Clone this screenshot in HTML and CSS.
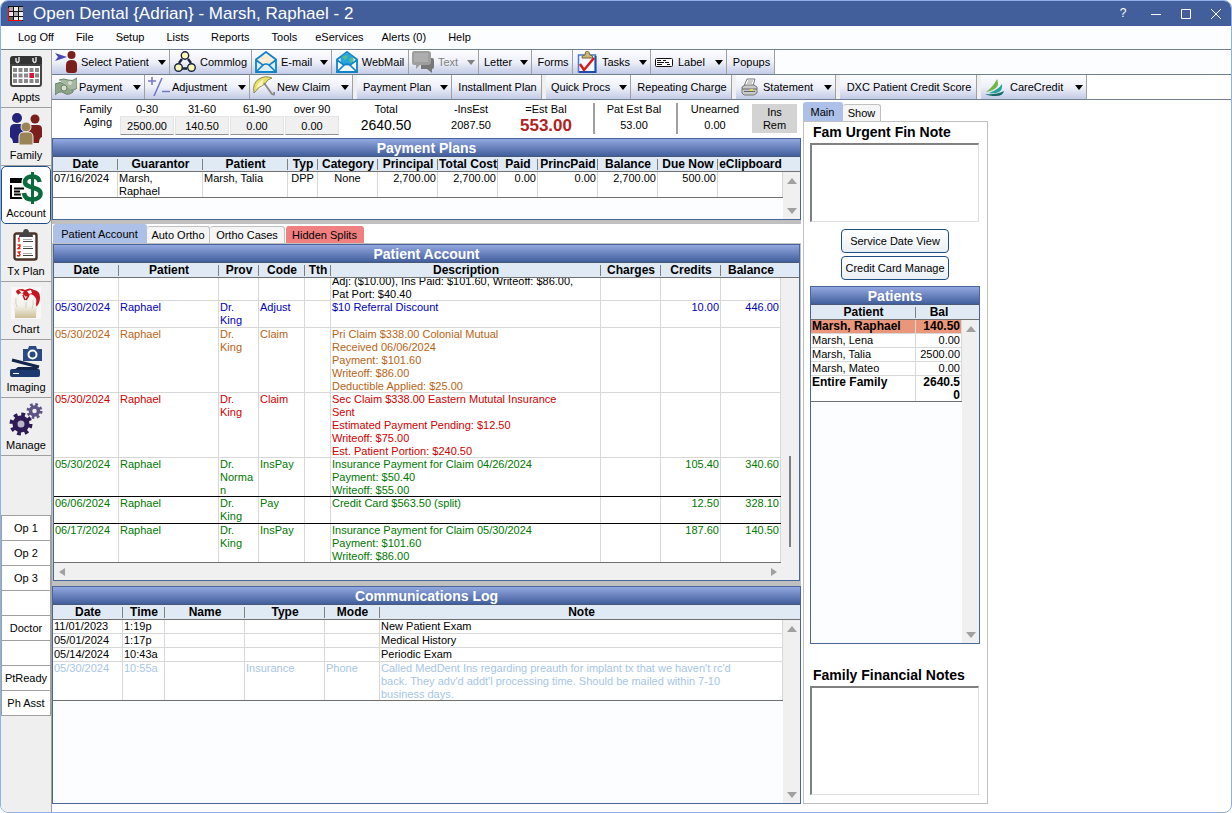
FILE: index.html
```html
<!DOCTYPE html>
<html lang="en">
<head>
  <meta charset="UTF-8">
  <meta name="viewport" content="width=device-width, initial-scale=1.0">
  <title>Open Dental {Adrian} - Marsh, Raphael - 2</title>
  <link rel="stylesheet" href="styles.css">
</head>
<body>
<div class="window">
  <header class="titlebar">
    <svg class="app-icon" width="16" height="16" viewBox="0 0 16 16">
      <rect width="15" height="15" fill="#111"/>
      <path d="M1 1h4v4H1zM11 1h4v4h-4zM6 6h4v4H6z" fill="#aaa"/>
      <path d="M6 1h4v4H6zM1 6h4v4H1zM11 6h4v4h-4zM6 11h4v3H6zM11 11h4v3h-4z" fill="#eee"/>
      <path d="M1 11h4v3H1z" fill="#666"/>
      <path d="M.5 2v13M0 14.5h14" stroke="#f00" stroke-width="1.2"/>
    </svg>
    <h1>Open Dental {Adrian} - Marsh, Raphael - 2</h1>
    <button class="win-btn help" aria-label="Help">?</button>
    <button class="win-btn" aria-label="Minimize"><svg width="12" height="12"><path d="M1 6.5h10" stroke="#fff"/></svg></button>
    <button class="win-btn" aria-label="Maximize"><svg width="12" height="12"><path d="M1.500 1.500h9v9h-9z" fill="none" stroke="#fff"/></svg></button>
    <button class="win-btn" aria-label="Close"><svg width="12" height="12"><path d="M1 1l10 10M11 1L1 11" stroke="#fff"/></svg></button>
  </header>

  <nav class="menu">
    <a href="#">Log Off</a><a href="#">File</a><a href="#">Setup</a><a href="#">Lists</a><a href="#">Reports</a><a href="#">Tools</a><a href="#">eServices</a><a href="#">Alerts (0)</a><a href="#">Help</a>
  </nav>

  <div class="body">
    <aside class="sidebar">
      <button class="module">
        <svg width="32" height="32" viewBox="0 0 32 32">
          <path d="M0 4q0-3 3-3h26q3 0 3 3v5H0z" fill="#333"/>
          <path d="M1 10h30v19q0 2-2 2H3q-2 0-2-2z" fill="#fff" stroke="#444" stroke-width="2"/>
          <path d="M3 15h26M3 20.500h26M3 26h26" stroke="#888" stroke-width="4" stroke-dasharray="4 1.500"/>
          <path d="M19.500 18h4.500v5h-4.500z" fill="#e0123f"/>
          <path d="M6 3v3q2 3 3 0V2M23 3v3q2 3 3 0V2" stroke="#ddd" stroke-width="1.500" fill="none"/>
        </svg>
        <span>Appts</span>
      </button>
      <button class="module">
        <svg width="34" height="32" viewBox="0 0 34 32">
          <circle cx="8" cy="5" r="5" fill="#23237a"/><path d="M1 24V16q0-5 5-5h4q5 0 5 5v14H4q0-4-3-6z" fill="#23237a"/>
          <circle cx="26" cy="6" r="4.500" fill="#7a1f1c"/><path d="M19 30V16q0-4 4-4h6q4 0 4 4v8q-3 1-3 6z" fill="#7a1f1c"/>
          <circle cx="17" cy="14" r="5" fill="#9a8354" stroke="#efefef"/><path d="M10 32v-8q0-5 5-5h4q5 0 5 5v8z" fill="#9a8354" stroke="#efefef"/>
        </svg>
        <span>Family</span>
      </button>
      <button class="module active">
        <svg width="34" height="32" viewBox="0 0 34 32">
          <path d="M1 6h18v5H1z" fill="#000"/><path d="M2 13v13h16M5 16.500h10M5 19.500h6M5 22.500h10" fill="none" stroke="#000" stroke-width="2"/>
          <path d="M30.500 10C30 5 26 4.500 23 4.500c-4 0-7 2-7 5.500 0 7 15.500 4 15.500 11.500 0 4-4 6-8 6-5 0-8-2-8.500-6.500" fill="none" stroke="#fff" stroke-width="7"/>
          <path d="M30.500 10C30 5 26 4.500 23 4.500c-4 0-7 2-7 5.500 0 7 15.500 4 15.500 11.500 0 4-4 6-8 6-5 0-8-2-8.500-6.500" fill="none" stroke="#0c6b3c" stroke-width="4.500"/>
          <path d="M23.500 0v32" stroke="#0c6b3c" stroke-width="3"/>
        </svg>
        <span>Account</span>
      </button>
      <button class="module">
        <svg width="26" height="32" viewBox="0 0 26 32">
          <rect x="1.500" y="4.500" width="22" height="26" rx="2" fill="#fff" stroke="#4b3325" stroke-width="2.400"/>
          <path d="M6 8q0-4 4-4 0-4 3-4t3 4q4 0 4 4z" fill="#444"/>
          <path d="M10 12.500h10M10 19.500h10M10 26.500h10" stroke="#444"/><path d="M10 10.500h9M10 17.500h9M10 24.500h9" stroke="#aaa"/>
          <path d="M5 10l1-1v4M4.500 16h2.500v1.500l-2 2h2.500M4.500 23h2.500l-1 1.500q2 1 0 2.500l-2-.5" fill="none" stroke="#e01a1a" stroke-width="1.300"/>
        </svg>
        <span>Tx Plan</span>
      </button>
      <button class="module">
        <svg width="30" height="32" viewBox="0 0 30 32">
          <defs>
            <linearGradient id="tooth" x1="0" y1="0" x2="0" y2="1"><stop offset="0" stop-color="#fff"/><stop offset=".6" stop-color="#f3f1ea"/><stop offset="1" stop-color="#cdbf97"/></linearGradient>
          </defs>
          <rect width="30" height="32" fill="#f8f8f8"/>
          <path d="M1 9Q2 3 8 2q7-2 13 0 8 1 8 8 0 7-3 11-1 4-1 10H4q0-7-1-11Q0 14 1 9z" fill="url(#tooth)"/>
          <path d="M6 3q5-2 8 0 5-3 9 0 6 1 6 7 0 6-3 9-1 1-1-2 1-5-1-7-3-4-6-2-3 3-5 0-3-3-5-1-1 2-2-1Q4 5 6 3z" fill="#c4161c"/>
          <path d="M12 8l2 5M18 8l-3 5" stroke="#c4161c" stroke-width="1.500"/>
          <path d="M8 3l5 1.500L11 7zM16 4l4-1 1 3-3 1z" fill="#fff"/>
          <path d="M5 11q-1 6 1 9M15 15v6M22 13q1 4-1 9" fill="none" stroke="#d2cfc4"/>
        </svg>
        <span>Chart</span>
      </button>
      <button class="module">
        <svg width="32" height="32" viewBox="0 0 32 32">
          <path d="M13 4h5l1-3h7l1 3h5v12H13z" fill="#2b4a84"/><circle cx="22.500" cy="9.500" r="4" fill="#2b4a84" stroke="#fff" stroke-width="2"/>
          <path d="M2 15l27 7" stroke="#14264c" stroke-width="3"/>
          <rect x="0" y="24" width="30" height="8" rx="2" fill="#1f3a70"/><path d="M4 25l4-3h18l3 3z" fill="#14264c"/><path d="M3 28.500h6" stroke="#fff"/>
        </svg>
        <span>Imaging</span>
      </button>
      <button class="module">
        <svg width="34" height="34" viewBox="0 0 34 34">
          <circle cx="12" cy="21" r="9.500" fill="none" stroke="#2e1a54" stroke-width="4" stroke-dasharray="3.730 3.730"/>
          <circle cx="12" cy="21" r="6" fill="#b9b4c8" stroke="#2e1a54" stroke-width="5"/>
          <circle cx="25.500" cy="8" r="6.500" fill="none" stroke="#5d5385" stroke-width="3" stroke-dasharray="2.550 2.550"/>
          <circle cx="25.500" cy="8" r="4" fill="#efefef" stroke="#5d5385" stroke-width="3.500"/>
        </svg>
        <span>Manage</span>
      </button>
      <ul class="rooms">
        <li>Op 1</li><li>Op 2</li><li>Op 3</li><li></li><li>Doctor</li><li></li><li>PtReady</li><li>Ph Asst</li>
      </ul>
    </aside>

    <div class="content">
      <div class="toolbar">
        <button class="tool select-patient"><svg width="22" height="22" viewBox="0 0 22 22"><path d="M0 2l12 4-12 4 3-4z" fill="#4747b5"/><circle cx="16.500" cy="4" r="4" fill="#7a1f1c"/><path d="M11 14q0-5 5.500-5t5.500 5v5q0 3-3 3h-5q-3 0-3-3z" fill="#7a1f1c"/></svg><span>Select Patient</span><i class="arrow"></i></button>
        <button class="tool commlog"><svg width="22" height="22" viewBox="0 0 22 22"><path d="M8 8l-3 4M14 8l3 4M8 17.500h5" stroke="#1a2340" stroke-width="2.400" fill="none"/><g fill="#fbf7b4" stroke="#1a2340" stroke-width="1.400"><circle cx="11" cy="4.500" r="3.700"/><circle cx="4.500" cy="16.500" r="3.800"/><circle cx="17.500" cy="16.500" r="3.800"/></g></svg><span>Commlog</span></button>
        <button class="tool email"><svg width="22" height="22" viewBox="0 0 22 22"><path d="M1 8.500L11 1l10 7.500V21H1z" fill="#d9effb" stroke="#1282c8" stroke-width="1.800"/><path d="M4 8l7-5.500L18 8v4l-7 4-7-4z" fill="#fdebd2"/><path d="M1 9l7 5L1 21M21 9l-7 5 7 7M8 14q3-2 6 0" fill="none" stroke="#1282c8" stroke-width="1.600"/></svg><span>E-mail</span><i class="arrow"></i></button>
        <button class="tool webmail"><svg width="22" height="22" viewBox="0 0 22 22"><path d="M1 8.500L11 1l10 7.500V21H1z" fill="#e6f5fc" stroke="#1282c8" stroke-width="1.800"/><circle cx="11" cy="9" r="6.500" fill="#27a5dc"/><path d="M6 6l4-2 2 2-3 3zM13 8l4-2v5l-3 1z" fill="#57bd8b"/><path d="M2 9.500l7 5h4l7-5v10H2z" fill="#f4fbff"/><path d="M1 9l7 5L1 21M21 9l-7 5 7 7M8 14q3-2 6 0" fill="none" stroke="#1282c8" stroke-width="1.600"/></svg><span>WebMail</span></button>
        <button class="tool text disabled"><svg width="22" height="22" viewBox="0 0 22 22"><path d="M9 7h11q2 0 2 2v7q0 2-2 2v4l-5-4H9z" fill="#777"/><path d="M2 0h14q3 0 3 3v8q0 3-3 3H8l-4 4v-4H2q-2 0-2-3V3q0-3 2-3z" fill="#9e9e9e"/><path d="M2 2h14v9H2z" fill="#adadad"/></svg><span>Text</span><i class="arrow"></i></button>
        <button class="tool letter"><span>Letter</span><i class="arrow"></i></button>
        <button class="tool forms"><span>Forms</span></button>
        <button class="tool tasks"><svg width="22" height="22" viewBox="0 0 22 22"><rect x="2.500" y="4" width="17" height="17" fill="#f4f8ff" stroke="#4a78d0" stroke-width="1.500"/><path d="M19.500 5v16H3" fill="none" stroke="#1f4cae" stroke-width="2"/><path d="M6 6q0-2 3-2 0-4 2-4t3 4q3 0 3 3H6z" fill="#c8b878" stroke="#75693c"/><path d="M4 13l4 6L18 7" fill="none" stroke="#d81b1b" stroke-width="2.500"/></svg><span>Tasks</span><i class="arrow"></i></button>
        <button class="tool label"><svg width="22" height="22" viewBox="0 0 22 22"><rect x="1.500" y="7.500" width="17" height="8" rx="1" fill="#fff" stroke="#111"/><path d="M3 9.500h4M9 9.500h3M3 11.500h7M11 11.500h4M3 13.500h5M13 13.500h3" stroke="#111"/></svg><span>Label</span><i class="arrow"></i></button>
        <button class="tool popups"><span>Popups</span></button>
      </div>
      <div class="toolbar second">
        <button class="tool payment"><svg width="22" height="22" viewBox="0 0 22 22"><path d="M0 8q5-3 10 0t8-3v11q-5 4-9 1t-9 2z" fill="#8fa58a" stroke="#6b8468"/><path d="M4 4q5-2 9 0t9-2v10q-3 3-6 2" fill="#a7b8a0" stroke="#6b8468"/><circle cx="9" cy="12" r="3" fill="#d7e0d0" stroke="#6b8468"/><circle cx="15" cy="7" r="2" fill="#d7e0d0"/></svg><span>Payment</span><i class="arrow"></i></button>
        <button class="tool adjustment"><svg width="22" height="22" viewBox="0 0 22 22"><path d="M0 5h8M4 1v8M6 20L14 2M14 15.500h8" stroke="#7878c8" stroke-width="1.600"/></svg><span>Adjustment</span><i class="arrow"></i></button>
        <button class="tool new-claim"><svg width="22" height="22" viewBox="0 0 22 22"><path d="M1 17Q-1 7 6 3q6-4 13-1-5 1-7 6-6 2-11 9z" fill="#e7e066" stroke="#8c8a52"/><path d="M3 12q2-6 8-9-2 4-1 6z" fill="#f8f6b4"/><path d="M11 7l8 11q3 2 2-2" fill="none" stroke="#888" stroke-width="1.800"/></svg><span>New Claim</span><i class="arrow"></i></button>
        <i class="gap"></i>
        <button class="tool payment-plan"><span>Payment Plan</span><i class="arrow"></i></button>
        <button class="tool installment"><span>Installment Plan</span></button>
        <i class="gap"></i>
        <button class="tool quick-procs"><span>Quick Procs</span><i class="arrow"></i></button>
        <button class="tool repeating"><span>Repeating Charge</span></button>
        <i class="gap"></i>
        <button class="tool statement"><svg width="22" height="22" viewBox="0 0 22 22"><path d="M8 3h8l-2 7H5z" fill="#fff" stroke="#777"/><path d="M9 5h5M8 7h5" stroke="#999"/><path d="M3 11l3-2h9l3 2v6l-3 2H5l-2-2z" fill="#c9c9c9" stroke="#777"/><path d="M3 13h15M5 15.500h11" stroke="#666"/><path d="M11 13h3v2h-3z" fill="#e4dc4c"/></svg><span>Statement</span><i class="arrow"></i></button>
        <i class="gap"></i>
        <button class="tool dxc"><span>DXC Patient Credit Score</span></button>
        <i class="gap"></i>
        <button class="tool carecredit"><svg width="22" height="22" viewBox="0 0 22 22"><path d="M2 16q7-5 11-13 2 5 0 8-4 4-11 5z" fill="#71b74a"/><path d="M5 17q9-3 13-9 1 5-3 8-4 2-10 1z" fill="#25a59a"/><path d="M1 18q11 1 19-3-1 5-8 5-7 0-11-2z" fill="#126a66"/></svg><span>CareCredit</span><i class="arrow"></i></button>
      </div>

      <div class="columns">
        <main class="main">
          <section class="aging">
            <div class="aging-title">Family<br>Aging</div>
            <div class="age"><label for="age1">0-30</label><input id="age1" value="2500.00" readonly></div>
            <div class="age"><label for="age2">31-60</label><input id="age2" value="140.50" readonly></div>
            <div class="age"><label for="age3">61-90</label><input id="age3" value="0.00" readonly></div>
            <div class="age"><label for="age4">over 90</label><input id="age4" value="0.00" readonly></div>
            <div class="sum total"><span>Total</span><b>2640.50</b></div>
            <div class="sum"><span>-InsEst</span><b>2087.50</b></div>
            <div class="sum balance"><span>=Est Bal</span><b>553.00</b></div>
            <i class="bar"></i>
            <div class="sum"><span>Pat Est Bal</span><b>53.00</b></div>
            <i class="bar"></i>
            <div class="sum unearned"><span>Unearned</span><b>0.00</b></div>
            <button class="ins-rem">Ins<br>Rem</button>
          </section>

          <section class="grid plans">
            <h2>Payment Plans</h2>
            <div class="grid-body">
              <div class="grid-table">
                <table>
                  <colgroup><col class="c65"><col class="c85"><col class="c85"><col class="c30"><col class="c60"><col class="c60"><col class="c60"><col class="c40"><col class="c60"><col class="c60"><col class="c60"><col></colgroup>
                  <thead><tr><th>Date</th><th>Guarantor</th><th>Patient</th><th>Typ</th><th>Category</th><th>Principal</th><th>Total Cost</th><th>Paid</th><th>PrincPaid</th><th>Balance</th><th>Due Now</th><th>eClipboard</th></tr></thead>
                  <tbody>
                    <tr class="last"><td>07/16/2024</td><td>Marsh,<br>Raphael</td><td>Marsh, Talia</td><td class="mid">DPP</td><td class="mid">None</td><td class="num">2,700.00</td><td class="num">2,700.00</td><td class="num">0.00</td><td class="num">0.00</td><td class="num">2,700.00</td><td class="num">500.00</td><td></td></tr>
                  </tbody>
                </table>
              </div>
              <div class="scroll"><i class="corner"></i><i class="up"></i><i class="down"></i></div>
            </div>
          </section>
          <div class="splitter"></div>

          <div class="tabs account-tabs">
            <button class="tab active">Patient Account</button><button class="tab">Auto Ortho</button><button class="tab">Ortho Cases</button><button class="tab hidden-splits">Hidden Splits</button>
          </div>
          <div class="tab-page">
            <section class="grid account">
              <h2>Patient Account</h2>
              <div class="grid-body">
                <div class="grid-table">
                  <table>
                    <colgroup><col class="c65"><col class="c100"><col class="c40"><col class="c46"><col class="c26"><col><col class="c60"><col class="c60"><col class="c60"></colgroup>
                    <thead><tr><th>Date</th><th>Patient</th><th>Prov</th><th>Code</th><th>Tth</th><th>Description</th><th>Charges</th><th>Credits</th><th>Balance</th></tr></thead>
                    <tbody>
                      <tr class="cut"><td></td><td></td><td></td><td></td><td></td><td><div class="tail">Adj: ($10.00), Ins Paid: $101.60, Writeoff: $86.00,<br>Pat Port: $40.40</div></td><td></td><td></td><td></td></tr>
                      <tr class="adjust"><td>05/30/2024</td><td>Raphael</td><td>Dr.<br>King</td><td>Adjust</td><td></td><td>$10 Referral Discount</td><td></td><td class="num">10.00</td><td class="num">446.00</td></tr>
                      <tr class="claim"><td>05/30/2024</td><td>Raphael</td><td>Dr.<br>King</td><td>Claim</td><td></td><td>Pri Claim $338.00 Colonial Mutual<br>Received 06/06/2024<br>Payment: $101.60<br>Writeoff: $86.00<br>Deductible Applied: $25.00</td><td></td><td></td><td></td></tr>
                      <tr class="claim-sent"><td>05/30/2024</td><td>Raphael</td><td>Dr.<br>King</td><td>Claim</td><td></td><td>Sec Claim $338.00 Eastern Mututal Insurance<br>Sent<br>Estimated Payment Pending: $12.50<br>Writeoff: $75.00<br>Est. Patient Portion: $240.50</td><td></td><td></td><td></td></tr>
                      <tr class="paid day-end"><td>05/30/2024</td><td>Raphael</td><td>Dr.<br>Norman</td><td>InsPay</td><td></td><td>Insurance Payment for Claim 04/26/2024<br>Payment: $50.40<br>Writeoff: $55.00</td><td></td><td class="num">105.40</td><td class="num">340.60</td></tr>
                      <tr class="paid day-end"><td>06/06/2024</td><td>Raphael</td><td>Dr.<br>King</td><td>Pay</td><td></td><td>Credit Card $563.50 (split)</td><td></td><td class="num">12.50</td><td class="num">328.10</td></tr>
                      <tr class="paid last"><td>06/17/2024</td><td>Raphael</td><td>Dr.<br>King</td><td>InsPay</td><td></td><td>Insurance Payment for Claim 05/30/2024<br>Payment: $101.60<br>Writeoff: $86.00</td><td></td><td class="num">187.60</td><td class="num">140.50</td></tr>
                    </tbody>
                  </table>
                </div>
                <div class="scroll"><i class="corner"></i><i class="thumb"></i></div>
              </div>
              <div class="hscroll"><i class="left"></i><i class="right"></i></div>
            </section>
          </div>

          <section class="grid commlog-grid">
            <h2>Communications Log</h2>
            <div class="grid-body">
              <div class="grid-table">
                <table>
                  <colgroup><col class="c70"><col class="c42"><col class="c80"><col class="c80"><col class="c55"><col></colgroup>
                  <thead><tr><th>Date</th><th>Time</th><th>Name</th><th>Type</th><th>Mode</th><th>Note</th></tr></thead>
                  <tbody>
                    <tr><td>11/01/2023</td><td>1:19p</td><td></td><td></td><td></td><td>New Patient Exam</td></tr>
                    <tr><td>05/01/2024</td><td>1:17p</td><td></td><td></td><td></td><td>Medical History</td></tr>
                    <tr><td>05/14/2024</td><td>10:43a</td><td></td><td></td><td></td><td>Periodic Exam</td></tr>
                    <tr class="insurance last"><td>05/30/2024</td><td>10:55a</td><td></td><td>Insurance</td><td>Phone</td><td>Called MedDent Ins regarding preauth for implant tx that we haven't rc'd<br>back. They adv'd addt'l processing time. Should be mailed within 7-10<br>business days.</td></tr>
                  </tbody>
                </table>
              </div>
              <div class="scroll"><i class="corner"></i><i class="up"></i><i class="down"></i></div>
            </div>
          </section>
        </main>

        <div class="side">
          <div class="tabs side-tabs">
            <button class="tab active">Main</button><button class="tab">Show</button>
          </div>
          <div class="panel">
            <label class="note-label" for="urgent">Fam Urgent Fin Note</label>
            <textarea id="urgent" class="urgent"></textarea>
            <button class="btn">Service Date View</button>
            <button class="btn">Credit Card Manage</button>
            <section class="grid patients">
              <h2>Patients</h2>
              <div class="grid-body">
                <div class="grid-table">
                  <table>
                    <colgroup><col><col class="c46"></colgroup>
                    <thead><tr><th>Patient</th><th>Bal</th></tr></thead>
                    <tbody>
                      <tr class="selected strong"><td>Marsh, Raphael</td><td class="num">140.50</td></tr>
                      <tr><td>Marsh, Lena</td><td class="num">0.00</td></tr>
                      <tr><td>Marsh, Talia</td><td class="num">2500.00</td></tr>
                      <tr><td>Marsh, Mateo</td><td class="num">0.00</td></tr>
                      <tr class="strong last"><td>Entire Family</td><td class="num">2640.50</td></tr>
                    </tbody>
                  </table>
                </div>
                <div class="scroll"><i class="corner"></i><i class="up"></i><i class="down"></i></div>
              </div>
            </section>
            <label class="note-label fin-label" for="financial">Family Financial Notes</label>
            <textarea id="financial" class="financial"></textarea>
          </div>
        </div>
      </div>
    </div>
  </div>
</div>
</body>
</html>
```

FILE: styles.css
```css
* {
  box-sizing: border-box;
}
body {
  margin: 0;
  background-color: #fff;
  font-family: "Liberation Sans", Arial, sans-serif;
  font-size: 11px;
  line-height: 13px;
  color: #000;
}
button, input, textarea {
  font: inherit;
  color: inherit;
  margin: 0;
  padding: 0;
  border-radius: 0;
}
button {
  border: none;
  background: none;
}
.window {
  display: flex;
  flex-direction: column;
  min-height: 100vh;
  border: 1px solid #8fb0e6;
  border-radius: 8px;
  overflow: hidden;
}

/* title bar */
.titlebar {
  display: flex;
  align-items: center;
  height: 25px;
  padding: 0 0 0 7px;
  background-color: #435f9b;
  color: #fff;
}
.titlebar h1 {
  flex: 1;
  margin: 0 0 0 9px;
  font-size: 17px;
  font-weight: normal;
  line-height: 24px;
}
.win-btn {
  display: flex;
  align-items: center;
  justify-content: center;
  width: 30px;
  height: 25px;
}
.win-btn.help {
  width: 36px;
  font-size: 12px;
}

/* menu */
.menu {
  display: flex;
  align-items: center;
  gap: 22px;
  height: 24px;
  padding-left: 17px;
  border-bottom: 1px solid #708090;
  background-color: #fcfdff;
}
.menu a {
  color: #000;
  text-decoration: none;
}
.menu a:nth-child(6),
.menu a:nth-child(7) {
  margin-right: -4px;
}

.body {
  display: flex;
  flex: 1;
}

/* module bar */
.sidebar {
  display: flex;
  flex-direction: column;
  flex: none;
  width: 51px;
  border-right: 1px solid #a0a0a0;
  background-color: #efefef;
}
.module {
  display: flex;
  flex-direction: column;
  align-items: center;
  justify-content: space-between;
  height: 58px;
  padding: 5px 0 3px;
  border-bottom: 1px solid #a0a0a0;
}
.module svg {
  flex: none;
}
.module.active {
  border: 1px solid #1f4e82;
  border-radius: 5px;
  background-color: #fff;
}
.rooms {
  list-style: none;
  margin: 59px 0 0;
  padding: 0;
}
.rooms li {
  height: 25px;
  border: 1px solid #a0a0a0;
  border-bottom: none;
  background-color: #fff;
  line-height: 24px;
  text-align: center;
}
.rooms li:last-child {
  height: 26px;
  border-bottom: 1px solid #a0a0a0;
}

/* toolbars */
.content {
  display: flex;
  flex-direction: column;
  flex: 1;
  min-width: 0;
}
.toolbar {
  display: flex;
  height: 25px;
  border-bottom: 1px solid #708090;
  background-color: #fcfdff;
}
.toolbar.second {
  background-color: #fff;
}
.tool {
  display: flex;
  align-items: center;
  justify-content: center;
  gap: 4px;
  padding: 0 3px;
  border-right: 1px solid #a0a0a0;
  background: linear-gradient(#fdfdff, #eef0f9 50%, #c3cbe6);
  white-space: nowrap;
}
.tool svg {
  flex: none;
}
.tool:has(.arrow) {
  justify-content: flex-start;
}
.tool span:first-child {
  padding-left: 2px;
}
.arrow {
  margin-left: auto;
  border: 4px solid transparent;
  border-top: 5px solid #000;
  border-bottom: none;
}
.disabled {
  color: #808080;
}
.disabled .arrow {
  border-top-color: #808080;
}
.gap {
  width: 4px;
  background-color: #f0f0f0;
}
.select-patient { width: 118px; }
.commlog { width: 82px; }
.email { width: 80px; }
.webmail { width: 77px; }
.text { width: 70px; }
.letter { width: 53px; }
.forms { width: 41px; }
.tasks { width: 78px; }
.label { width: 76px; gap: 2px; }
.popups { width: 48px; }
.payment { width: 93px; gap: 2px; }
.adjustment { width: 105px; gap: 2px; }
.new-claim { width: 103px; gap: 2px; }
.payment-plan { width: 95px; padding-left: 4px; }
.installment { width: 90px; }
.quick-procs { width: 85px; }
.repeating { width: 101px; }
.statement { width: 100px; gap: 2px; }
.dxc { width: 137px; }
.carecredit { width: 106px; }

/* columns */
.columns {
  display: grid;
  grid-template-columns: minmax(0, 749px) 185px;
  gap: 2px;
  flex: 1;
  padding-bottom: 8px;
}
.main {
  display: flex;
  flex-direction: column;
}

/* aging row */
.aging {
  display: flex;
  height: 38px;
  padding: 3px 4px 0 0;
  text-align: center;
}
.aging-title {
  width: 60px;
  margin-right: 8px;
  text-align: right;
}
.age {
  width: 54px;
  margin-right: 1px;
}
.age label {
  display: block;
}
.age input {
  width: 100%;
  height: 19px;
  border: 1px solid #e4e4e4;
  border-bottom-color: #909090;
  background-color: #f0f0f0;
  text-align: center;
}
.sum {
  display: flex;
  flex-direction: column;
  gap: 3px;
  width: 78px;
}
.sum b {
  font-weight: normal;
}
.sum.total {
  width: 92px;
}
.total b {
  font-size: 14px;
}
.sum.balance {
  width: 72px;
  margin-right: 8px;
}
.balance b {
  font-size: 17px;
  font-weight: bold;
  color: #b22222;
}
.sum.unearned {
  flex: 1;
}
.bar {
  width: 2px;
  height: 31px;
  margin-left: 3px;
  background-color: #a0a0a0;
}
.ins-rem {
  width: 45px;
  height: 29px;
  margin-top: 1px;
  background-color: #d3d3d3;
}

/* grids */
.grid {
  display: flex;
  flex-direction: column;
  border: 1px solid #4a6597;
  background-color: #fcfdff;
}
.grid h2 {
  height: 18px;
  margin: 0;
  border-bottom: 1px solid #4a5878;
  background: linear-gradient(#93a8e0, #415e9c);
  color: #fff;
  font-size: 14px;
  line-height: 18px;
  text-align: center;
}
.grid-body {
  display: flex;
  flex: 1;
}
.grid-table {
  flex: 1;
  min-width: 0;
}
.grid table {
  width: 100%;
  table-layout: fixed;
  border-spacing: 0;
}
.grid th {
  height: 15px;
  padding: 0;
  border-bottom: 1px solid #707070;
  background: linear-gradient(#808080, #808080) right 2px / 1px 11px no-repeat #dfeaf5;
  font-size: 12px;
  line-height: 14px;
  white-space: nowrap;
}
.grid th:last-child {
  background: #dfeaf5;
}
.grid td {
  height: 14px;
  padding: 0 2px 0 1px;
  background-color: #fff;
  box-shadow: inset -1px -1px #d8d8d8;
  vertical-align: top;
  overflow-wrap: anywhere;
}
.grid .last td {
  box-shadow: inset 0 -1px #707070, inset -1px 0 #d8d8d8;
}
.grid .num {
  text-align: right;
}
.grid .mid {
  text-align: center;
}
.c26 { width: 26px; }
.c30 { width: 30px; }
.c40 { width: 40px; }
.c42 { width: 42px; }
.c46 { width: 46px; }
.c55 { width: 55px; }
.c60 { width: 60px; }
.c65 { width: 65px; }
.c70 { width: 70px; }
.c80 { width: 80px; }
.c85 { width: 85px; }
.c100 { width: 100px; }

/* scroll bars */
.scroll {
  display: flex;
  flex-direction: column;
  align-items: center;
  width: 17px;
  padding-bottom: 5px;
  background-color: #f0f0f0;
}
.corner {
  width: 100%;
  height: 15px;
  border-bottom: 1px solid #707070;
  background-color: #dfeaf5;
}
.up, .down {
  border: 5px solid transparent;
}
.up {
  margin-top: 6px;
  border-top: none;
  border-bottom: 6px solid #a0a0a0;
}
.down {
  margin-top: auto;
  border-bottom: none;
  border-top: 6px solid #a0a0a0;
}
.hscroll {
  display: flex;
  align-items: center;
  justify-content: space-between;
  height: 17px;
  padding: 0 22px 0 5px;
  background-color: #f0f0f0;
}
.left, .right {
  border: 4px solid transparent;
}
.left {
  border-left: none;
  border-right: 6px solid #a0a0a0;
}
.right {
  border-right: none;
  border-left: 6px solid #a0a0a0;
}

.plans {
  height: 82px;
}
.splitter {
  height: 4px;
  background-color: #c0c0c0;
}

/* tabs */
.tabs {
  display: flex;
  align-items: flex-end;
}
.tab {
  height: 17px;
  padding: 0;
  border: 1px solid #c0c0c0;
  border-bottom: none;
  border-left-width: 0;
  border-radius: 3px 3px 0 0;
  background-color: #f5f5f5;
}
.tab.active {
  height: 19px;
  border-color: #acc0e8;
  background-color: #acc0e8;
}
.account-tabs {
  height: 19px;
  padding-left: 1px;
}
.account-tabs .tab {
  width: 75px;
}
.account-tabs .active {
  width: 94px;
}
.account-tabs .active + .tab {
  width: 63px;
}
.account-tabs .hidden-splits {
  width: 78px;
  margin-left: 1px;
  border-color: #f08080;
  background-color: #f08080;
}
.tab-page {
  padding: 1px 1px 5px;
  background-color: #c0c0c0;
}

/* account rows */
.account .scroll {
  width: 18px;
}
.account tbody td {
  height: 27px;
}
.account .cut td {
  height: 23px;
}
.tail {
  display: flow-root;
  height: 23px;
  overflow: hidden;
}
.tail::before {
  content: "";
  display: block;
  margin-top: -3px;
}
.adjust { color: #0000b8; }
.claim { color: #b86414; }
.claim-sent { color: #d00000; }
.paid { color: #007800; }
.account .day-end td {
  box-shadow: inset 0 -1px #000, inset -1px 0 #d8d8d8;
}
.thumb {
  width: 2px;
  height: 91px;
  margin-top: auto;
  margin-bottom: 11px;
  background-color: #808080;
}
.commlog-grid {
  flex: 1;
}
.insurance {
  color: #a6c6e6;
}

/* right side */
.side {
  display: flex;
  flex-direction: column;
}
.side-tabs {
  height: 21px;
}
.side-tabs .tab {
  width: 38px;
}
.side-tabs .active {
  width: 40px;
}
.panel {
  display: flex;
  flex-direction: column;
  flex: 1;
  padding: 0 7px 8px 6px;
  border: 1px solid #c0c0c0;
}
.note-label {
  padding: 0 3px;
  font-size: 14px;
  font-weight: bold;
  line-height: 21px;
}
.panel textarea {
  margin-right: 1px;
  border: 1px solid #e0e0e0;
  border-top: 2px solid #808080;
  border-left: 2px solid #808080;
  background-color: #fff;
  resize: none;
}
.panel .urgent {
  height: 79px;
  margin-bottom: 7px;
}
.btn {
  align-self: center;
  width: 108px;
  height: 24px;
  margin-bottom: 3px;
  border: 1px solid #1f4e82;
  border-radius: 4px;
  background: linear-gradient(#fff, #eaf0f5);
  white-space: nowrap;
}
.patients {
  flex: 1;
  margin-top: 3px;
}
.selected td {
  background-color: #e9967a;
}
.strong {
  font-size: 12px;
  font-weight: bold;
}
.fin-label {
  margin-top: 21px;
}
.financial {
  height: 109px;
}
```
